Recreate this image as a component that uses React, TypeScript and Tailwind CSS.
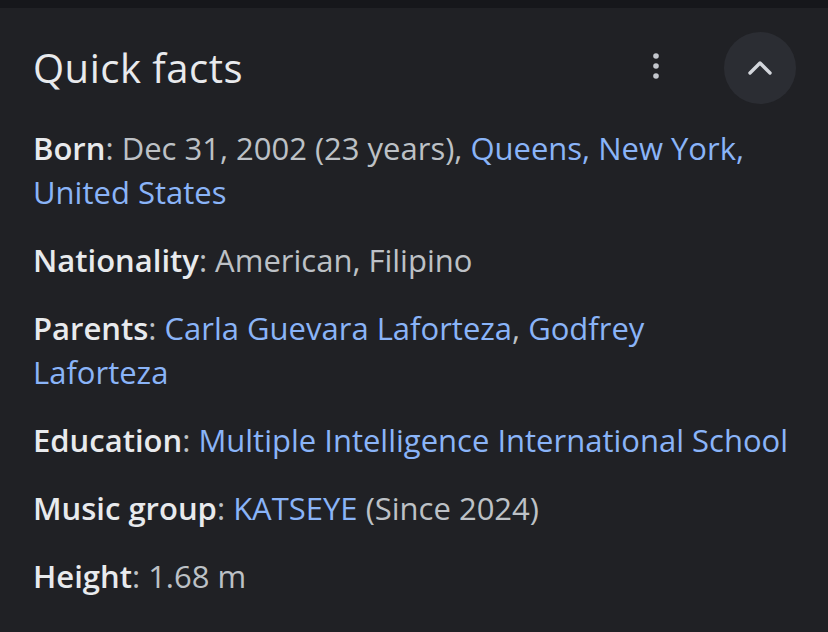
export default function App() {
  const label = "font-semibold text-[#e8eaed]";
  const value = "text-[#bdc1c6]";
  const link = "text-[#8ab4f8]";
  return (
    <div className="w-[828px] h-[632px] bg-[#202125] overflow-hidden font-['Open_Sans',sans-serif]">
      <div className="h-[8px] bg-[#16171b]" />
      <div className="flex items-center h-[80px] pl-[33px] pr-[32px] mt-[20px]">
        <h1 className="flex-1 text-[40px] text-[#e8eaed] tracking-[0.5px]">Quick facts</h1>
        <div className="w-[24px] h-[72px] flex items-center justify-center mr-[56px] pb-[4px]">
          <svg width="6" height="26" viewBox="0 0 6 26" fill="#c4c7cd">
            <circle cx="3" cy="3" r="2.8" />
            <circle cx="3" cy="13" r="2.8" />
            <circle cx="3" cy="23" r="2.8" />
          </svg>
        </div>
        <div className="w-[72px] h-[72px] rounded-full bg-[#2b2d33] flex items-center justify-center">
          <svg width="26" height="16" viewBox="0 0 26 16" fill="none" stroke="#d3d6dc" strokeWidth="3.4" strokeLinecap="round" strokeLinejoin="round">
            <path d="M3 13 L13 3 L23 13" />
          </svg>
        </div>
      </div>
      <div className="flex flex-col gap-[24px] pl-[33px] pr-[30px] pt-[18px] text-[31px] leading-[44px]">
        <p>
          <span className={label}>Born</span>
          <span className={value}>: Dec 31, 2002 (23 years), </span>
          <span className={link}>Queens, New York,</span>
          <br />
          <span className={link}>United States</span>
        </p>
        <p>
          <span className={label}>Nationality</span>
          <span className={value}>: American, Filipino</span>
        </p>
        <p>
          <span className={label}>Parents</span>
          <span className={value}>: </span>
          <span className={link}>Carla Guevara Laforteza</span>
          <span className={value}>, </span>
          <span className={link}>Godfrey</span>
          <br />
          <span className={link}>Laforteza</span>
        </p>
        <p>
          <span className={label}>Education</span>
          <span className={value}>: </span>
          <span className={link}>Multiple Intelligence International School</span>
        </p>
        <p>
          <span className={label}>Music group</span>
          <span className={value}>: </span>
          <span className={link}>KATSEYE</span>
          <span className={value}> (Since 2024)</span>
        </p>
        <p>
          <span className={label}>Height</span>
          <span className={value}>: 1.68 m</span>
        </p>
      </div>
    </div>
  );
}
